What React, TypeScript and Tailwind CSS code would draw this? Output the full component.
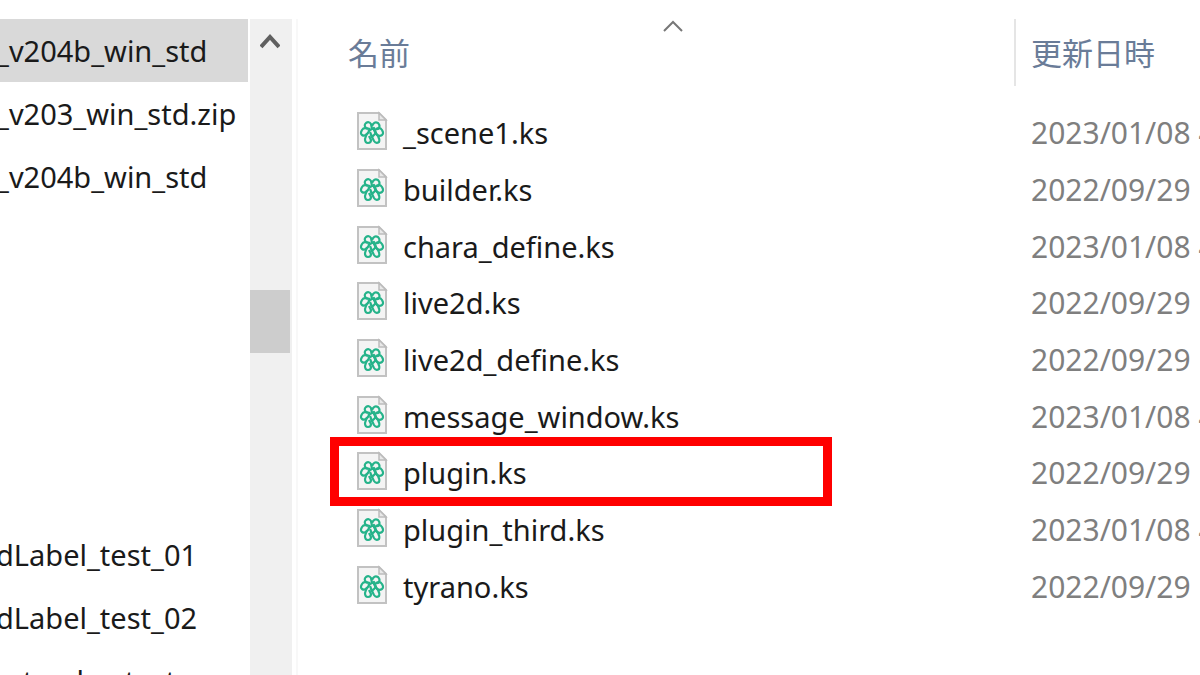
import clsx from "clsx";

const treeItems = [
  { label: "_v204b_win_std", selected: true },
  { label: "_v203_win_std.zip" },
  { label: "_v204b_win_std" },
  { label: "" },
  { label: "" },
  { label: "" },
  { label: "" },
  { label: "" },
  { label: "dLabel_test_01" },
  { label: "dLabel_test_02" },
  { label: "_st_echo_test" },
];

const files = [
  { name: "_scene1.ks", date: "2023/01/08 4:16" },
  { name: "builder.ks", date: "2022/09/29 16:30" },
  { name: "chara_define.ks", date: "2023/01/08 4:16" },
  { name: "live2d.ks", date: "2022/09/29 16:30" },
  { name: "live2d_define.ks", date: "2022/09/29 16:30" },
  { name: "message_window.ks", date: "2023/01/08 4:16" },
  { name: "plugin.ks", date: "2022/09/29 16:30", marked: true },
  { name: "plugin_third.ks", date: "2023/01/08 4:16" },
  { name: "tyrano.ks", date: "2022/09/29 16:30" },
];

// Page with a folded corner and the green knot of the editor
const FileIcon = () => (
  <svg viewBox="0 0 32 40" className="mb-1 h-10 w-8 shrink-0" aria-hidden="true">
    <path d="M2 2H23L30 9V38H2Z" fill="#f4f4f4" stroke="#c2c2c2" strokeWidth="2" />
    <path d="M23 2V9H30Z" fill="#e8e8e8" stroke="#bcbcbc" strokeWidth="1.5" />
    <g fill="none" stroke="#25b38a" strokeWidth="2.2" strokeLinejoin="round">
      <path d="M14 18L10 17Q7.500 14 10 12Q13 10 15 13L16 18" />
      <path d="M16 15Q18 10 22 12Q25 15 22 18L17 19" />
      <path d="M20 18Q24 16 26 19Q28 22 26 24Q23 26 20 23L18 19" />
      <path d="M12 18Q8 16 6 19Q4 22 6 24Q9 26 12 22L14 18" />
      <path d="M11 22L9 28Q9 32 12 32Q15 32 15 29L13 25" />
      <path d="M15 24L18 30Q20 33 23 31Q24 29 22 25L19 21" />
      <path d="M12 20L18 17L20 22L16 26L14 21" />
    </g>
  </svg>
);

const App = () => {
  return (
    <div className="flex h-screen overflow-hidden bg-white pt-[19px] font-['Noto_Sans','Noto_Sans_CJK_JP',sans-serif] text-[29px] leading-10 text-[#1a1a1a]">
      {/* Folder tree */}
      <nav aria-label="Folders" className="w-[248px] shrink-0 overflow-hidden">
        <ul>
          {treeItems.map((item, idx) => (
            <li key={idx} className={clsx("flex h-[63px] items-center", item.selected && "bg-[#d9d9d9]")}>
              {item.label && (
                <a href="#" className="-ml-1 whitespace-nowrap">
                  {item.label}
                </a>
              )}
            </li>
          ))}
        </ul>
      </nav>

      {/* Scrollbar */}
      <div className="ml-0.5 flex w-[42px] shrink-0 flex-col bg-[#f0f0f0]">
        <button aria-label="Scroll up" className="flex h-11 w-10 items-center justify-center">
          <svg viewBox="0 0 20 16" className="h-4 w-5" fill="none" stroke="#606060" strokeWidth="4">
            <path d="M1 14L10 4L19 14" />
          </svg>
        </button>
        <div className="mt-[227px] h-[63px] w-10 bg-[#cdcdcd]" />
      </div>

      {/* File list */}
      <main className="ml-1 min-w-0 flex-1 overflow-hidden border-l-2 border-[#f8f8f8]">
        <table className="w-full table-fixed border-collapse text-left">
          <thead>
            <tr className="h-[67px] text-[31px] text-[#6a7c98]">
              <th className="relative p-0 pl-[50px] font-normal">
                名前
                <svg viewBox="0 0 20 12" className="absolute left-[365px] top-px h-3 w-5" fill="none" stroke="#777" strokeWidth="2">
                  <path d="M1 11L10 2L19 11" />
                </svg>
              </th>
              <th className="w-[185px] border-l-2 border-[#e5e5e5] p-0 pl-[15px] font-normal">更新日時</th>
            </tr>
          </thead>
        </table>
        <table aria-label="Files" className="mt-[19px] h-[510px] w-full table-fixed border-collapse text-left">
          <tbody>
            {files.map((file) => (
              <tr key={file.name}>
                <td className="relative p-0 pl-[58px]">
                  <div className="flex items-center gap-[15px]">
                    <FileIcon />
                    <span className="whitespace-nowrap">{file.name}</span>
                  </div>
                  {file.marked && (
                    <div className="absolute -top-2 left-8 h-[69px] w-[502px] border-9 border-[#ff0000]" />
                  )}
                </td>
                <td className="w-[185px] whitespace-nowrap p-0 pl-4 text-[30px] text-[#7f7f7f]">{file.date}</td>
              </tr>
            ))}
          </tbody>
        </table>
      </main>
    </div>
  );
};

export default App;
